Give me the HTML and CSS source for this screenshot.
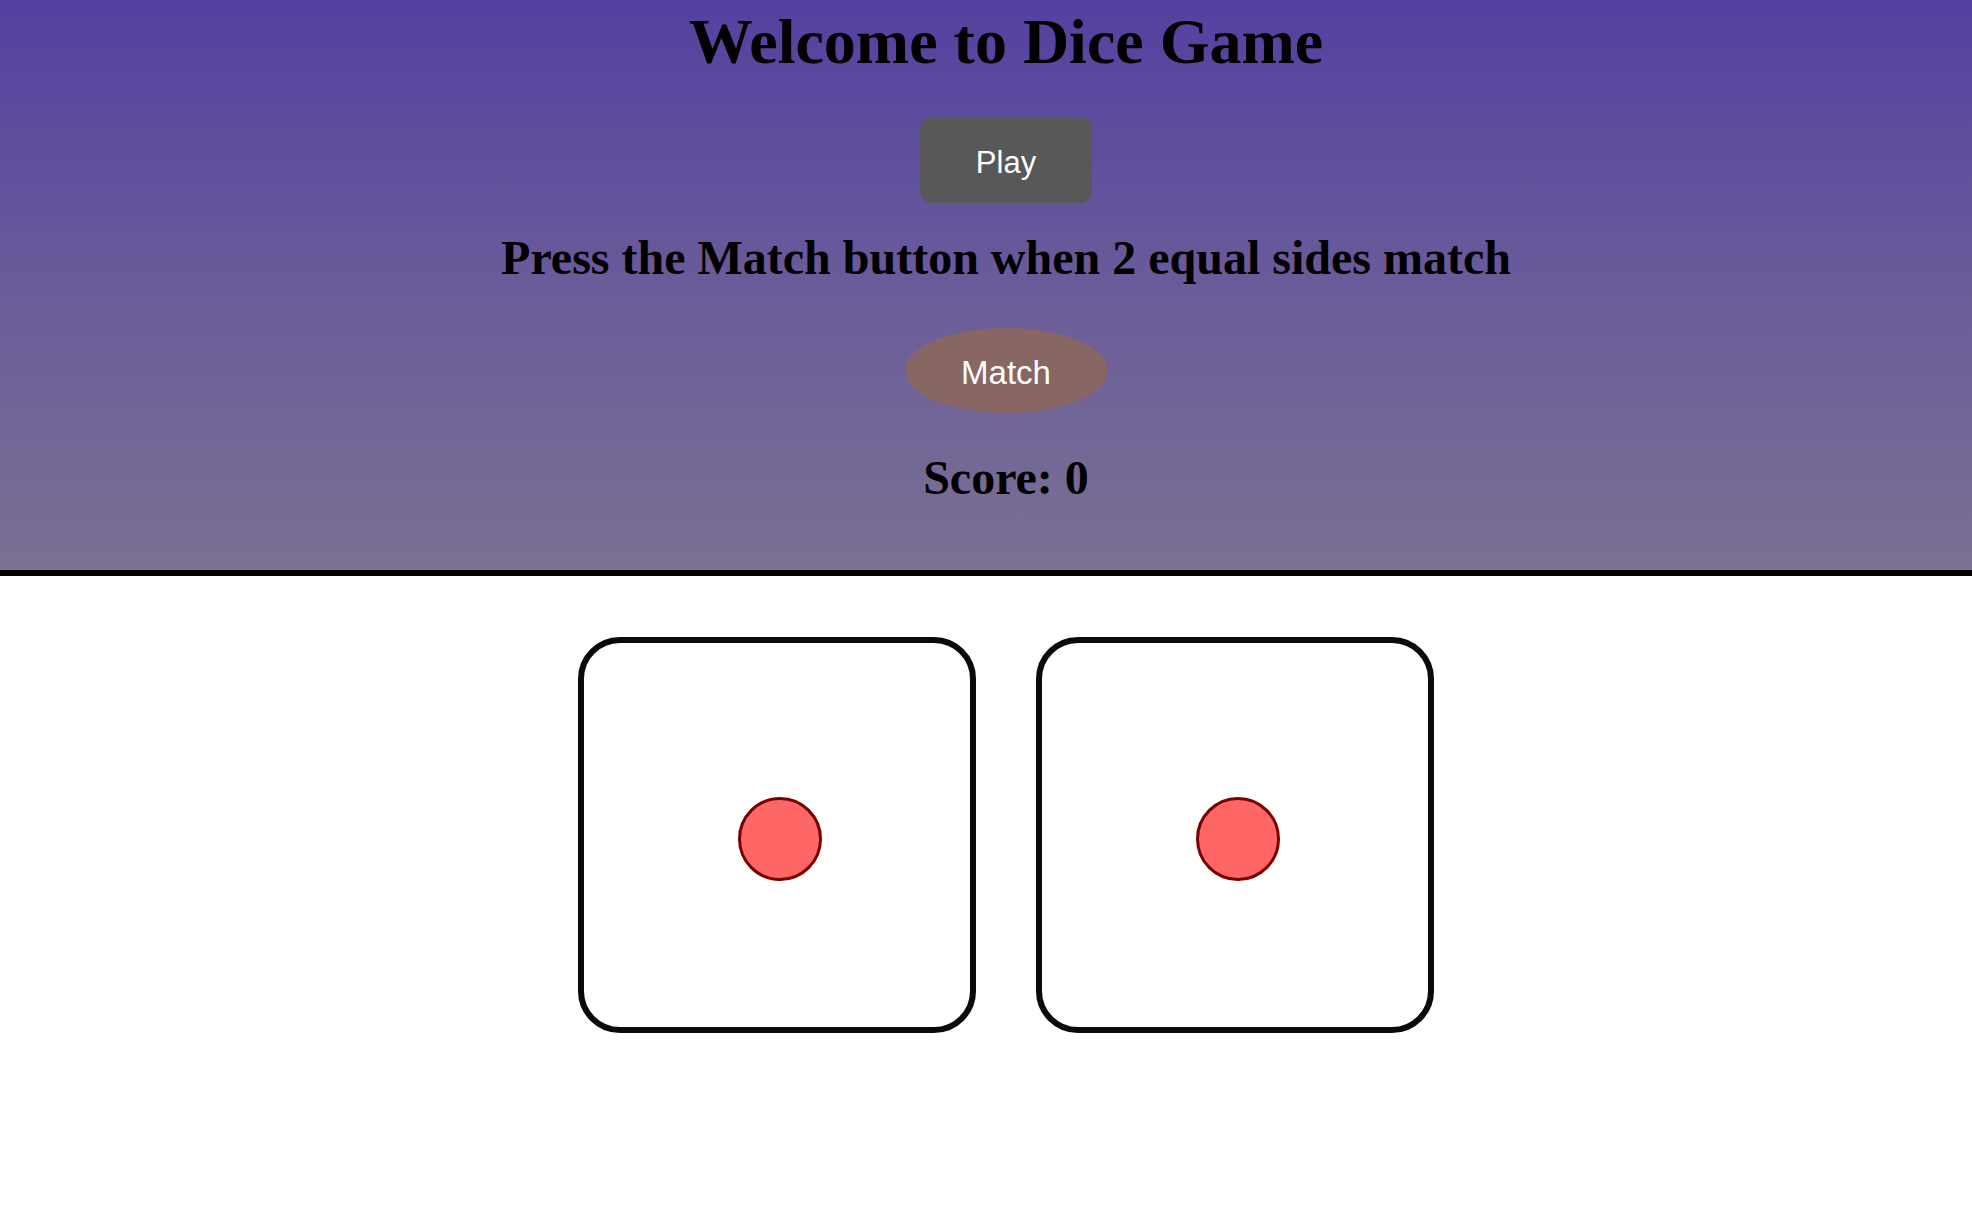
FILE: index.html
```html
<!DOCTYPE html>
<html lang="en">
<head>
<meta charset="utf-8">
<title>Dice Game</title>
<link rel="stylesheet" href="styles.css">
</head>
<body>
  <header class="top">
    <h1 class="title">Welcome to Dice Game</h1>
    <button class="btn-play" type="button">Play</button>
    <h2 class="subtitle">Press the Match button when 2 equal sides match</h2>
    <button class="btn-match" type="button">Match</button>
    <h2 class="score">Score: 0</h2>
  </header>
  <main class="board">
    <div class="die"><span class="pip"></span></div>
    <div class="die"><span class="pip"></span></div>
  </main>
</body>
</html>
```

FILE: styles.css
```css
html, body {
  margin: 0;
  padding: 0;
  background: #ffffff;
}

body {
  font-family: "Liberation Serif", "Times New Roman", serif;
  color: #000;
}

.top {
  display: flex;
  flex-direction: column;
  align-items: center;
  padding: 5px 0 64px 40px;
  background: linear-gradient(to bottom, #5540a0 0%, #6a5b9a 50%, #7a7193 100%);
  border-bottom: 6px solid #000;
}

.title {
  margin: 0;
  font-size: 64px;
  line-height: 74px;
  font-weight: bold;
}

.subtitle,
.score {
  margin: 0;
  font-size: 48px;
  line-height: 56px;
  font-weight: bold;
}

.btn-play,
.btn-match {
  box-sizing: border-box;
  font-family: "Liberation Sans", Arial, sans-serif;
  font-size: 31px;
  color: #ffffff;
  border: none;
  padding: 5px 0 0;
  cursor: pointer;
}

.btn-play {
  margin-top: 38px;
  width: 172px;
  height: 86px;
  border-radius: 12px;
  background: #585858;
}

.subtitle {
  margin-top: 27px;
}

.btn-match {
  margin-top: 42px;
  width: 203px;
  height: 85px;
  border-radius: 50%;
  background: #886664;
  font-size: 33px;
}

.score {
  margin-top: 37px;
}

.board {
  display: flex;
  justify-content: center;
  gap: 60px;
  padding: 61px 0 0 40px;
}

.die {
  box-sizing: border-box;
  width: 398px;
  height: 396px;
  border: 6px solid #0a0a0a;
  border-radius: 42px;
  background: #fff;
  display: flex;
  align-items: center;
  justify-content: center;
}

.pip {
  box-sizing: border-box;
  width: 84px;
  height: 84px;
  margin: 7px 0 0 6px;
  border-radius: 50%;
  background: #ff6666;
  border: 3px solid #7a0000;
}
```
